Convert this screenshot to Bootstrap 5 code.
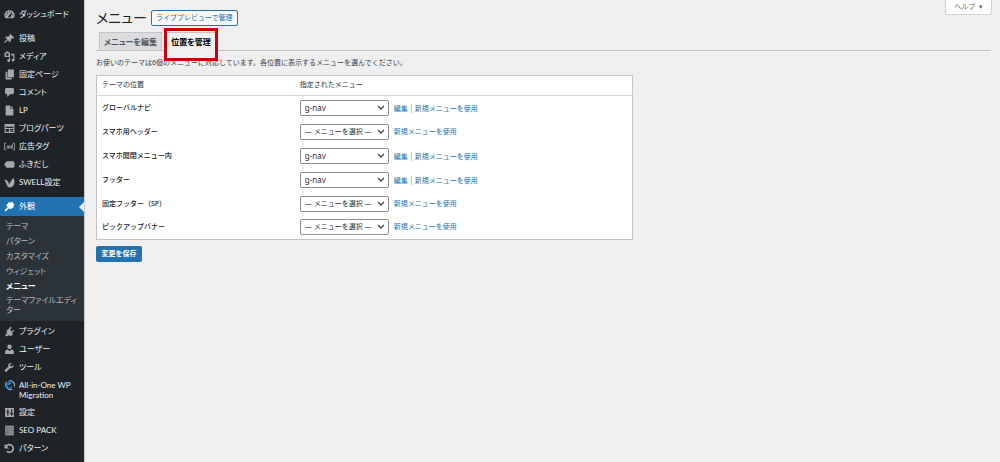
<!DOCTYPE html>
<html lang="ja">
<head>
<meta charset="utf-8">
<meta name="viewport" content="width=device-width, initial-scale=1">
<title>メニュー</title>
<link href="https://cdn.jsdelivr.net/npm/bootstrap@5.3.0/dist/css/bootstrap.min.css" rel="stylesheet">
<style>
body{background:#efefef;color:#3c434a;font:7px/12px "Noto Sans","Noto Sans CJK JP",sans-serif}
a{color:#2271b1;text-decoration:none}
.side{width:84px;background:#1d2327;box-shadow:1px 0 #c8cacc;padding-top:5px;font-family:Lato,"Noto Sans CJK JP",sans-serif;font-size:8px;font-feature-settings:"palt"}
.side ul{list-style:none;margin:0;padding:0}
.side .item{display:flex;align-items:flex-start;min-height:18px;padding:4px 0 3px 4px;color:#f0f0f1;line-height:10px;gap:4px}
.side svg{width:11px;height:11px;flex:none;fill:#a7aaad;stroke:none}
.side .gap-top{margin-top:6px}
.side .current{background:#2271b1;color:#fff;min-height:19px;position:relative}
.side .current svg{fill:#fff}
.side .current::after{content:"";position:absolute;right:0;top:5px;border:5px solid transparent;border-right-color:#efefef;border-left:0}
.side .sub{background:#2c3338;padding:3px 6px 6px;margin-bottom:1px}
.sub a{display:block;color:#b4b9be;line-height:15px}
.sub a.on{color:#fff;font-weight:600}
.sub a.long{line-height:10px;padding-top:1px}
.main{padding:0 9px 0 12px}
h1{font-size:14px;line-height:20px;font-weight:400;color:#1d2327;font-feature-settings:"palt"}
.help{border:1px solid #d0d2d6;border-top:0;border-radius:0 0 3px 3px;background:#fff;color:#646970;padding:0 7px;height:15px;width:47px;white-space:nowrap}
.live{border:1px solid #2271b1;border-radius:2px;background:#f6f7f7;color:#2271b1;height:16px;line-height:14px;width:87px;white-space:nowrap}
.tabs{border-bottom:1px solid #c3c4c7;padding-left:3px;height:19px}
.tabs a{border:1px solid #c3c4c7;border-bottom:0;background:#dcdcde;color:#50575e;font-weight:600;font-size:8px;font-feature-settings:"palt";height:18px;line-height:18px;text-align:center}
.tabs .edit{width:63px}
.tabs .place{width:52px;background:#efefef;color:#000;height:19px;margin-left:3px;position:relative}
.frame{position:absolute;inset:-5px -2px -10px;border:3px solid #c7000b}
.intro{margin:6px 0}
.locations{width:60%;border:1px solid #c3c4c7;background:#fff}
.locations th{font-weight:400;padding:3px 5px 4px;border-bottom:1px solid #d5d7da;color:#2c3338}
.locations td{height:24px;padding:0 5px;vertical-align:middle}
.locations th:first-child{width:37%}
.locations label{font-weight:500;color:#1d2327}
.pick{appearance:none;width:89px;height:16px;padding:0 4px;margin-right:3px;border:1px solid #8c8f94;border-radius:2px;color:#2c3338;line-height:14px;background:#fff url("data:image/svg+xml,%3Csvg xmlns='http://www.w3.org/2000/svg' viewBox='0 0 8 8'%3E%3Cpath d='M1 2l3 3 3-3' fill='none' stroke='%233c434a' stroke-width='1.3'/%3E%3C/svg%3E") no-repeat right 3px center/8px}
.pick.named{font-size:8px}
.alt{border-left:1px solid #c3c4c7;padding-left:3px;margin-left:3px}
.save{background:#2271b1;color:#fff;border:0;border-radius:2px;height:16px;width:46px;padding:0;margin-top:6px;font-weight:600;line-height:16px}
</style>
</head>
<body>
<div class="d-flex min-vh-100">
<nav class="side flex-shrink-0" aria-label="管理メニュー">
<ul>
<li><a class="item" href="#"><svg viewBox="0 0 20 20"><path d="M3 17a9 9 0 1 1 14 0z"/><path d="M9 4h2v2H9zM5 6h2v2H5zM3 10h2v2H3zM15 10h2v2h-2zM14 6l1 1-3 7a2 2 0 1 1-3-2z" fill="#1d2327"/></svg>ダッシュボード</a></li>
<li class="gap-top"><a class="item" href="#"><svg viewBox="0 0 20 20"><path d="M11 1l8 8-1 1-3-1-3 4c1 2 0 3-1 4l-4-4-6 5-1-1 6-6-4-3c1-1 3-2 5-1l4-3-1-2z"/></svg>投稿</a></li>
<li><a class="item" href="#"><svg viewBox="0 0 20 20"><path d="M1 3h2l1-2h4l1 2h2v8H1zM6 4a2.500 2.500 0 1 0 .1 0zM13 5h6v11a2.500 2.500 0 1 1-2-2V8h-4zM9 12h2v5a2.500 2.500 0 1 1-2-2z" fill-rule="evenodd"/></svg>メディア</a></li>
<li><a class="item" href="#"><svg viewBox="0 0 20 20"><path d="M7 1h11v14H7zM3 5h3v11h8v3H3z"/></svg>固定ページ</a></li>
<li><a class="item" href="#"><svg viewBox="0 0 20 20"><path d="M4 2h12q2 0 2 2v7q0 2-2 2h-5l-5 5v-5H4q-2 0-2-2V4q0-2 2-2z"/></svg>コメント</a></li>
<li><a class="item" href="#"><svg viewBox="0 0 20 20"><path d="M3 1h8v6h6v12H3zM12 1l5 5h-5z"/></svg>LP</a></li>
<li><a class="item" href="#"><svg viewBox="0 0 20 20"><path d="M1 2h18v16H1zM3 7v2h14V7zM3 11v5h6v-5zM11 11v2h6v-2zM11 14v2h6v-2z" fill-rule="evenodd"/></svg>ブログパーツ</a></li>
<li><a class="item" href="#"><svg viewBox="0 0 20 20"><path d="M4 4H1v12h3M16 4h3v12h-3M9 8v6M15 5v9" fill="none" stroke="#a7aaad" stroke-width="1.500"/><circle cx="7" cy="11" r="2" fill="none" stroke="#a7aaad" stroke-width="1.500"/><circle cx="13" cy="11" r="2" fill="none" stroke="#a7aaad" stroke-width="1.500"/></svg>広告タグ</a></li>
<li><a class="item" href="#"><svg viewBox="0 0 20 20"><path d="M6 4h10q3 0 3 3v6q0 3-3 3H6q-3 0-3-3l-3-3 3-3q0-3 3-3z"/></svg>ふきだし</a></li>
<li><a class="item" href="#"><svg viewBox="0 0 20 20"><path d="M0 5c5-1 8 2 9 8 3-2 4-8 8-11 4 6 2 17-7 17C5 19 5 10 0 5z"/></svg>SWELL設定</a></li>
<li class="gap-top"><a class="item current" href="#" aria-current="true"><svg viewBox="0 0 20 20"><path d="M9 2l3 1 2-2 5 5-2 3 1 2-6 4-3-2-6 6-2-2 6-6-3-3z"/></svg>外観</a>
<div class="sub"><a href="#">テーマ</a><a href="#">パターン</a><a href="#">カスタマイズ</a><a href="#">ウィジェット</a><a class="on" href="#">メニュー</a><a class="long" href="#">テーマファイルエディター</a></div></li>
<li><a class="item" href="#"><svg viewBox="0 0 20 20"><path d="M12 1l2 2-3 4 3 3 4-3 1 1-4 4 1 4-4 2-4-1-4 2-2-2 3-3 0-6 4-3z"/></svg>プラグイン</a></li>
<li><a class="item" href="#"><svg viewBox="0 0 20 20"><circle cx="10" cy="5" r="4"/><path d="M2 18v-5q1-3 5-3l3 3 3-3q4 0 5 3v5z"/></svg>ユーザー</a></li>
<li><a class="item" href="#"><svg viewBox="0 0 20 20"><path d="M17 5l-3 3-3-1 0-2 3-3c-4-1-7 2-6 6l-7 7q1 3 3 3l7-7c4 1 7-2 6-6z"/></svg>ツール</a></li>
<li><a class="item" href="#"><svg viewBox="0 0 20 20"><path d="M5 3a9 9 0 0 0 10 14M10 1a9 9 0 0 1 9 11" fill="none" stroke="#a7aaad" stroke-width="2"/><path d="M14 12a4.500 4.500 0 1 1-4-6M8 2l4 4-4 3" fill="none" stroke="#1687d9" stroke-width="2.500"/></svg><span>All-in-One WP Migration</span></a></li>
<li><a class="item" href="#"><svg viewBox="0 0 20 20"><path d="M2 2h16v16H2zM6 4v4H4v2h2v6h2v-6h2V8H8V4zM13 4v7h-2v2h2v3h2v-3h2v-2h-2V4z" fill-rule="evenodd"/></svg>設定</a></li>
<li><a class="item" href="#"><svg viewBox="0 0 20 20"><path d="M2 1h16v18H2z" fill="#8b8e91"/><path d="M6 1v18M2 5h16M2 10h16M2 15h16" stroke="#62676b"/></svg>SEO PACK</a></li>
<li><a class="item" href="#"><svg viewBox="0 0 20 20"><path d="M4 6a7 7 0 1 1 1 9" fill="none" stroke="#a7aaad" stroke-width="3"/><path d="M1 2v8h8z"/></svg>パターン</a></li>
</ul>
</nav>
<main class="main flex-grow-1 position-relative">
<button class="help position-absolute top-0 end-0 me-2" type="button">ヘルプ&nbsp; ▾</button>
<div class="d-flex align-items-center gap-1 pt-2"><h1 class="mb-0">メニュー</h1><a class="live text-center" href="#">ライブプレビューで管理</a></div>
<div class="tabs d-flex mt-1"><a class="edit" href="#">メニューを編集</a><a class="place" href="#" aria-current="page">位置を管理<span class="frame"></span></a></div>
<p class="intro">お使いのテーマは6個のメニューに対応しています。各位置に表示するメニューを選んでください。</p>
<form>
<table class="locations">
<thead><tr><th scope="col">テーマの位置</th><th scope="col">指定されたメニュー</th></tr></thead>
<tbody>
<tr><td><label for="l1">グローバルナビ</label></td><td><select class="pick named" id="l1"><option>g-nav</option></select> <a href="#">編集</a><a class="alt" href="#">新規メニューを使用</a></td></tr>
<tr><td><label for="l2">スマホ用ヘッダー</label></td><td><select class="pick" id="l2"><option>— メニューを選択 —</option></select> <a href="#">新規メニューを使用</a></td></tr>
<tr><td><label for="l3">スマホ開閉メニュー内</label></td><td><select class="pick named" id="l3"><option>g-nav</option></select> <a href="#">編集</a><a class="alt" href="#">新規メニューを使用</a></td></tr>
<tr><td><label for="l4">フッター</label></td><td><select class="pick named" id="l4"><option>g-nav</option></select> <a href="#">編集</a><a class="alt" href="#">新規メニューを使用</a></td></tr>
<tr><td><label for="l5">固定フッター（SP）</label></td><td><select class="pick" id="l5"><option>— メニューを選択 —</option></select> <a href="#">新規メニューを使用</a></td></tr>
<tr><td><label for="l6">ピックアップバナー</label></td><td><select class="pick" id="l6"><option>— メニューを選択 —</option></select> <a href="#">新規メニューを使用</a></td></tr>
</tbody>
</table>
<button class="save" type="submit">変更を保存</button>
</form>
</main>
</div>
<script src="https://cdn.jsdelivr.net/npm/bootstrap@5.3.0/dist/js/bootstrap.bundle.min.js"></script>
</body>
</html>
